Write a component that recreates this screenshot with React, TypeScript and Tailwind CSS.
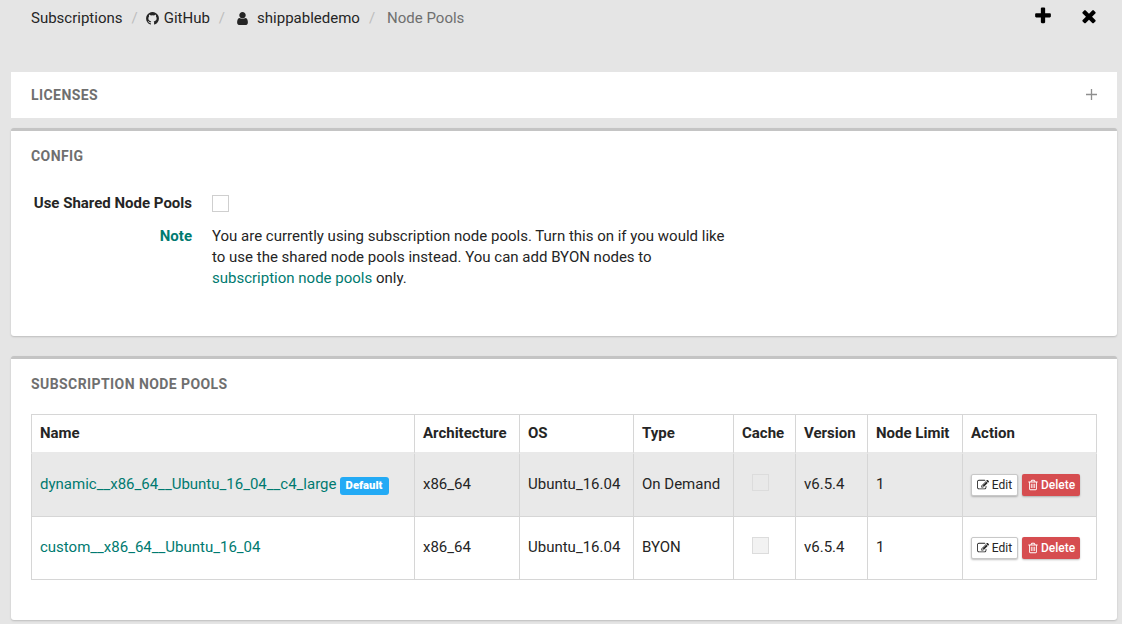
import type { ReactNode } from "react";

const PATHS = {
  user: "M1536 1399q0 109-62.5 187t-150.5 78h-854q-88 0-150.5-78t-62.5-187q0-85 8.5-160.5t31.5-152 58.5-131 94-89 134.5-34.5q131 128 313 128t313-128q76 0 134.5 34.5t94 89 58.5 131 31.5 152 8.5 160.5zm-256-887q0 159-112.5 271.5t-271.5 112.5-271.5-112.5-112.5-271.5 112.5-271.5 271.5-112.5 271.5 112.5 112.5 271.5z",
  edit: "M888 1184l116-116-152-152-116 116v56h96v96h56zm440-720q-16-16-33 1l-350 350q-17 17-1 33t33-1l350-350q17-17 1-33zm80 594v190q0 119-84.5 203.5t-203.5 84.5h-832q-119 0-203.5-84.5t-84.5-203.5v-832q0-119 84.5-203.5t203.5-84.5h832q63 0 117 25 15 7 18 23 3 17-9 29l-49 49q-14 14-32 8-23-6-45-6h-832q-66 0-113 47t-47 113v832q0 66 47 113t113 47h832q66 0 113-47t47-113v-126q0-13 9-22l64-64q15-15 35-7t20 29zm-96-738l288 288-672 672h-288v-288zm444 132l-92 92-288-288 92-92q28-28 68-28t68 28l152 152q28 28 28 68t-28 68z",
  trash: "M704 736v576q0 14-9 23t-23 9h-64q-14 0-23-9t-9-23v-576q0-14 9-23t23-9h64q14 0 23 9t9 23zm256 0v576q0 14-9 23t-23 9h-64q-14 0-23-9t-9-23v-576q0-14 9-23t23-9h64q14 0 23 9t9 23zm256 0v576q0 14-9 23t-23 9h-64q-14 0-23-9t-9-23v-576q0-14 9-23t23-9h64q14 0 23 9t9 23zm128 724v-948h-896v948q0 22 7 40.5t14.5 27 10.5 8.5h832q3 0 10.5-8.5t14.5-27 7-40.5zm-672-1076h448l-48-117q-7-9-17-11h-317q-10 2-17 11zm928 32v64q0 14-9 23t-23 9h-96v948q0 83-47 143.5t-113 60.5h-832q-66 0-113-58.5t-47-141.5v-952h-96q-14 0-23-9t-9-23v-64q0-14 9-23t23-9h309l70-167q15-37 54-63t79-26h320q40 0 79 26t54 63l70 167h309q14 0 23 9t9 23z",
  plus: "M1600 736v192q0 40-28 68t-68 28h-416v416q0 40-28 68t-68 28h-192q-40 0-68-28t-28-68v-416h-416q-40 0-68-28t-28-68v-192q0-40 28-68t68-28h416v-416q0-40 28-68t68-28h192q40 0 68 28t28 68v416h416q40 0 68 28t28 68z",
  times: "M1490 1322q0 40-28 68l-136 136q-28 28-68 28t-68-28l-294-294-294 294q-28 28-68 28t-68-28l-136-136q-28-28-28-68t28-68l294-294-294-294q-28-28-28-68t28-68l136-136q28-28 68-28t68 28l294 294 294-294q28-28 68-28t68 28l136 136q28 28 28 68t-28 68l-294 294 294 294q28 28 28 68z",
  github: "M896 128q209 0 385.5 103t279.5 279.5 103 385.5q0 251-146.5 451.5t-378.5 277.5q-27 5-40-7t-13-30q0-3 .5-76.5t.5-134.5q0-97-52-142 57-6 102.5-18t94-39 81-66.5 53-105 20.5-150.5q0-119-79-206 37-91-8-204-28-9-81 11t-92 44l-38 24q-93-26-192-26t-192 26q-16-11-42.5-27t-83.5-38.5-85-13.5q-45 113-8 204-79 87-79 206 0 85 20.5 150t52.5 105 80.5 67 94 39 102.5 18q-39 36-49 103-21 10-45 15t-57 5-65.5-21.5-55.5-62.5q-19-32-48.5-52t-49.5-24l-20-3q-21 0-29 4.5t-5 11.5 9 14 13 12l7 5q22 10 43.5 38t31.5 51l10 23q13 38 44 61.5t67 30 69.5 7 55.5-3.5l23-4q0 38 .5 88.5t.5 54.5q0 18-13 30t-40 7q-232-77-378.5-277.5t-146.5-451.5q0-209 103-385.5t279.5-279.5 385.5-103z",
};

function Icon({ name, className }: { name: keyof typeof PATHS; className: string }) {
  return (
    <svg viewBox="0 0 1792 1792" fill="currentColor" className={`shrink-0 ${className}`} aria-hidden="true">
      <path d={PATHS[name]} />
    </svg>
  );
}

function Separator({ className }: { className: string }) {
  return <span className={`text-[#bdbdbd] ${className}`}>/</span>;
}

function Panel({ title, className, children }: { title: string; className: string; children: ReactNode }) {
  return (
    <section className={`rounded-[3px] border-t-[3px] border-[#c4c4c4] bg-white px-5 shadow-[0_1px_2px_rgba(0,0,0,0.18)] ${className}`}>
      <h2 className="pt-[15px] text-[14px] leading-[20px] font-bold tracking-[0.42px] text-[#6f6f6f]">{title}</h2>
      {children}
    </section>
  );
}

const COLUMNS = [
  { label: "Name", width: "w-[384px]" },
  { label: "Architecture", width: "w-[105px]" },
  { label: "OS", width: "w-[114px]" },
  { label: "Type", width: "w-[100px]" },
  { label: "Cache", width: "w-[62px]" },
  { label: "Version", width: "w-[72px]" },
  { label: "Node Limit", width: "w-[95px]" },
  { label: "Action", width: "w-[134px]" },
];

const POOLS = [
  { name: "dynamic__x86_64__Ubuntu_16_04__c4_large", isDefault: true, type: "On Demand" },
  { name: "custom__x86_64__Ubuntu_16_04", isDefault: false, type: "BYON" },
];

const CELL = "h-[63px] border-r border-b border-[#d6d6d6] p-0 pl-2 align-top first:border-l";

function Cell({ children }: { children: ReactNode }) {
  return (
    <td className={CELL}>
      <div className="pt-5 leading-[21px] whitespace-nowrap">{children}</div>
    </td>
  );
}

export default function App() {
  return (
    <div className="h-[624px] w-[1122px] overflow-hidden bg-[#e5e5e5] pr-[5px] pl-[11px] font-['Roboto',sans-serif] text-[15px] leading-[21px] text-[#252525]">
      <header className="flex h-[72px] items-start justify-between pl-5">
        <nav className="flex items-center pt-[8px] whitespace-nowrap">
          <a>Subscriptions</a>
          <Separator className="ml-[9px]" />
          <Icon name="github" className="mb-px ml-[7px] size-[15px]" />
          <a className="ml-[4px]">GitHub</a>
          <Separator className="ml-[9px]" />
          <Icon name="user" className="mb-px ml-[10px] size-[15px]" />
          <a className="ml-[7px]">shippabledemo</a>
          <Separator className="ml-[9px]" />
          <span className="ml-[12px] text-[#6f6f6f]">Node Pools</span>
        </nav>
        <div className="flex gap-[26px] pt-[6px] pr-[18px] text-black">
          <Icon name="plus" className="size-5" />
          <Icon name="times" className="size-5" />
        </div>
      </header>

      <section className="flex h-[46px] items-center justify-between bg-white pr-[20px] pl-5">
        <h2 className="text-[14px] leading-[20px] font-bold tracking-[0.42px] text-[#6f6f6f]">LICENSES</h2>
        <svg viewBox="0 0 11 11" className="mb-[2px] size-[11px]" stroke="#8f8f8f" strokeWidth="1.3" aria-hidden="true">
          <path d="M5.5 0v11M0 5.5h11" />
        </svg>
      </section>

      <Panel title="CONFIG" className="mt-[10px] h-[208px]">
        <div className="mt-[27px] grid grid-cols-[161px_520px] gap-x-5 gap-y-3">
          <div className="text-right font-bold">Use Shared Node Pools</div>
          <div className="mt-[2px] size-[17px] border border-[#cfcfcf] bg-white" />
          <div className="text-right font-bold text-[#007a70]">Note</div>
          <p className="whitespace-nowrap">
            You are currently using subscription node pools. Turn this on if you would like
            <br />
            to use the shared node pools instead. You can add BYON nodes to
            <br />
            <a className="text-[#007a70]">subscription node pools</a> only.
          </p>
        </div>
      </Panel>

      <Panel title="SUBSCRIPTION NODE POOLS" className="mt-5 h-[264px]">
        <table className="mt-5 w-[1066px] table-fixed border-separate border-spacing-0">
          <thead>
            <tr>
              {COLUMNS.map((c) => (
                <th
                  key={c.label}
                  className={`h-10 border-t border-r border-b-2 border-[#d6d6d6] border-b-[#e9e9e9] p-0 pl-2 text-left align-top font-bold first:border-l ${c.width}`}
                >
                  <div className="pt-[8px] whitespace-nowrap">{c.label}</div>
                </th>
              ))}
            </tr>
          </thead>
          <tbody>
            {POOLS.map((p) => (
              <tr key={p.name} className="odd:bg-[#e9e9e9]">
                <Cell>
                  <div className="flex">
                    <a className="text-[#007a70]">{p.name}</a>
                    {p.isDefault && (
                      <span className="mt-[3px] ml-[3px] h-[18px] w-[49px] rounded-[3px] bg-[#23aaf5] text-center text-[11.25px] leading-[17px] font-black text-white">
                        Default
                      </span>
                    )}
                  </div>
                </Cell>
                <Cell>x86_64</Cell>
                <Cell>Ubuntu_16.04</Cell>
                <Cell>{p.type}</Cell>
                <Cell>
                  <div className="ml-[10px] size-[17px] border border-[#dcdcdc] bg-[#e9e9e9]/60" />
                </Cell>
                <Cell>v6.5.4</Cell>
                <Cell>1</Cell>
                <Cell>
                  <div className="flex gap-1 text-[12px] leading-[20px]">
                    <button className="flex h-[22px] w-[47px] items-center justify-center gap-[3px] rounded-[2px] border border-[#c8c8c8] bg-white tracking-[0.1px] shadow-[0_1px_2px_rgba(0,0,0,0.25)]">
                      <Icon name="edit" className="size-3" />
                      Edit
                    </button>
                    <button className="flex h-[22px] w-[58px] items-center justify-center gap-[2px] rounded-[2px] bg-[#d64d50] font-medium text-white shadow-[0_1px_2px_rgba(0,0,0,0.25)]">
                      <Icon name="trash" className="size-3" />
                      Delete
                    </button>
                  </div>
                </Cell>
              </tr>
            ))}
          </tbody>
        </table>
      </Panel>
    </div>
  );
}
